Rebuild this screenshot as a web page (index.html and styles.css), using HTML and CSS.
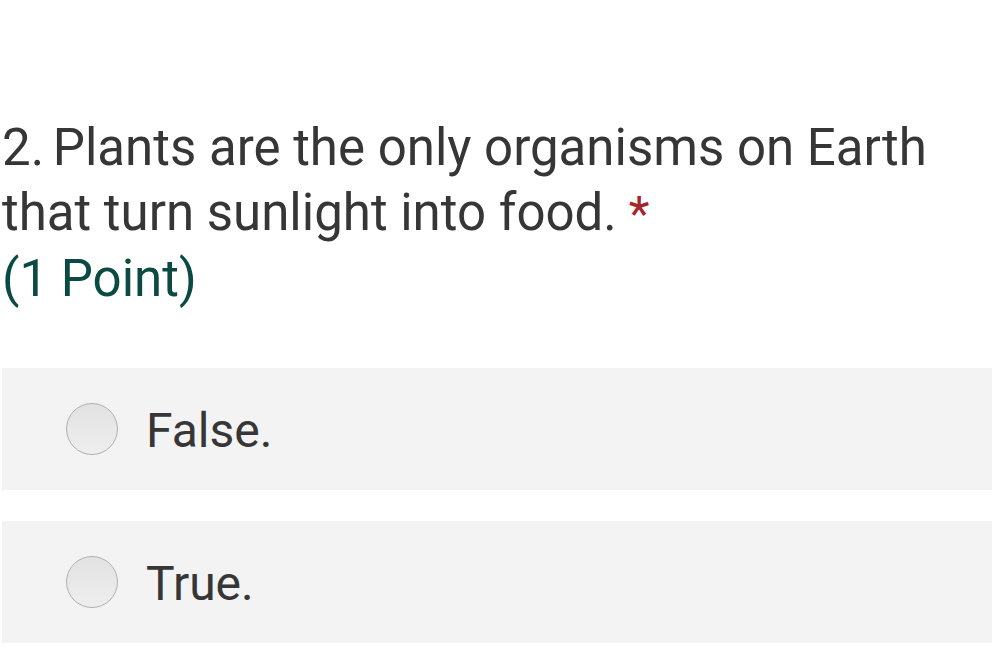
FILE: index.html
```html
<!DOCTYPE html>
<html>
<head>
<meta charset="utf-8">
<link rel="stylesheet" href="styles.css">
</head>
<body>
<div class="page">
  <div class="question">
    <div class="title"><span class="num">2.</span> Plants are the only organisms on Earth that turn sunlight into food.<span class="req">*</span></div>
    <div class="points">(1 Point)</div>
  </div>
  <div class="options">
    <label class="option"><span class="radio"></span><span class="label">False.</span></label>
    <label class="option"><span class="radio"></span><span class="label">True.</span></label>
  </div>
</div>
</body>
</html>
```
FILE: styles.css
```css
html, body {
  margin: 0;
  padding: 0;
  background: #ffffff;
}
.page {
  width: 1000px;
  height: 670px;
  font-family: Roboto, "Liberation Sans", sans-serif;
  color: #363636;
}
.question {
  padding: 115px 0 0 2px;
  width: 960px;
}
.title {
  font-size: 51px;
  line-height: 65px;
}
.num {
  margin-right: -4px;
}
.req {
  color: #a4262c;
  margin-left: 12px;
  font-size: 48px;
}
.points {
  font-size: 51px;
  line-height: 65px;
  color: #0a4a42;
}
.options {
  display: flex;
  flex-direction: column;
  gap: 31px;
  margin-top: 57px;
  padding-left: 2px;
  width: 990px;
}
.option {
  display: flex;
  align-items: center;
  height: 122px;
  background: #f3f3f3;
  padding-left: 64px;
  box-sizing: border-box;
}
.radio {
  width: 50px;
  height: 50px;
  border-radius: 50%;
  border: 1px solid #b0b0b0;
  background: linear-gradient(#e2e2e2, #eeeeee);
  flex: none;
}
.label {
  font-size: 48px;
  margin-left: 28px;
  margin-top: 2px;
}
```
